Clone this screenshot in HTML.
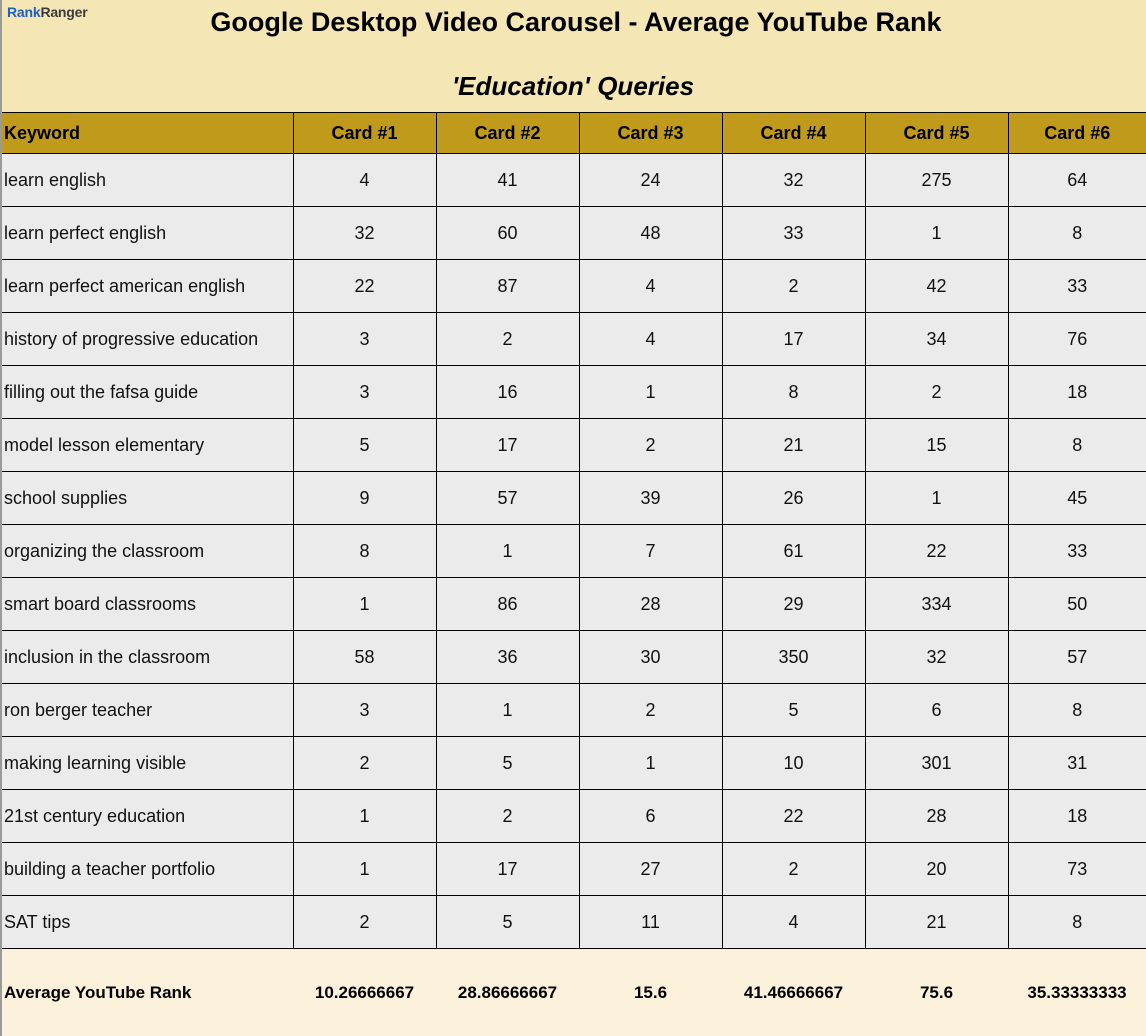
<!DOCTYPE html>
<html><head><meta charset="utf-8"><style>
html,body{margin:0;padding:0;width:1146px;height:1036px;overflow:hidden;background:#f5e7b5;font-family:"Liberation Sans",sans-serif;}
.wrap{position:absolute;left:0;top:0;width:1146px;height:1036px;}
.lb{position:absolute;left:0;top:0;width:2px;height:1036px;background:#9a9a9a;z-index:5}
.logo{position:absolute;left:7px;top:4px;font-size:14px;font-weight:bold;color:#3a3a3a;letter-spacing:-0.2px}
.logo span{color:#1f5fbf}
.t1{position:absolute;left:0;width:1152px;top:7px;text-align:center;font-size:27px;font-weight:bold;color:#000}
.t2{position:absolute;left:0;width:1146px;top:71px;text-align:center;font-size:26px;font-weight:bold;font-style:italic;color:#000}
table{position:absolute;left:0;top:112px;border-collapse:collapse;table-layout:fixed;width:1146px}
td{border:1px solid #000;font-size:18px;color:#111;text-align:center;padding:0;height:52px;background:#ebebeb}
td:first-child{text-align:left;padding-left:4px;border-left:none}
td:last-child{border-right:none}
tr.h td{background:#c09a1a;font-weight:bold;height:40px;color:#000;font-size:18px}
tr.f td{background:#fcf2dc;border:none;border-top:1px solid #000;height:87px;font-weight:bold;color:#000;font-size:17px}
</style></head><body><div class="wrap">
<div class="lb"></div>
<div class="logo"><span>Rank</span>Ranger</div>
<div class="t1">Google Desktop Video Carousel - Average YouTube Rank</div>
<div class="t2">'Education' Queries</div>
<table>
<colgroup><col style="width:293px"><col style="width:143px"><col style="width:143px"><col style="width:143px"><col style="width:143px"><col style="width:143px"><col style="width:138px"></colgroup>
<tr class="h"><td>Keyword</td><td>Card #1</td><td>Card #2</td><td>Card #3</td><td>Card #4</td><td>Card #5</td><td>Card #6</td></tr>
<tr><td>learn english</td><td>4</td><td>41</td><td>24</td><td>32</td><td>275</td><td>64</td></tr>
<tr><td>learn perfect english</td><td>32</td><td>60</td><td>48</td><td>33</td><td>1</td><td>8</td></tr>
<tr><td>learn perfect american english</td><td>22</td><td>87</td><td>4</td><td>2</td><td>42</td><td>33</td></tr>
<tr><td>history of progressive education</td><td>3</td><td>2</td><td>4</td><td>17</td><td>34</td><td>76</td></tr>
<tr><td>filling out the fafsa guide</td><td>3</td><td>16</td><td>1</td><td>8</td><td>2</td><td>18</td></tr>
<tr><td>model lesson elementary</td><td>5</td><td>17</td><td>2</td><td>21</td><td>15</td><td>8</td></tr>
<tr><td>school supplies</td><td>9</td><td>57</td><td>39</td><td>26</td><td>1</td><td>45</td></tr>
<tr><td>organizing the classroom</td><td>8</td><td>1</td><td>7</td><td>61</td><td>22</td><td>33</td></tr>
<tr><td>smart board classrooms</td><td>1</td><td>86</td><td>28</td><td>29</td><td>334</td><td>50</td></tr>
<tr><td>inclusion in the classroom</td><td>58</td><td>36</td><td>30</td><td>350</td><td>32</td><td>57</td></tr>
<tr><td>ron berger teacher</td><td>3</td><td>1</td><td>2</td><td>5</td><td>6</td><td>8</td></tr>
<tr><td>making learning visible</td><td>2</td><td>5</td><td>1</td><td>10</td><td>301</td><td>31</td></tr>
<tr><td>21st century education</td><td>1</td><td>2</td><td>6</td><td>22</td><td>28</td><td>18</td></tr>
<tr><td>building a teacher portfolio</td><td>1</td><td>17</td><td>27</td><td>2</td><td>20</td><td>73</td></tr>
<tr><td>SAT tips</td><td>2</td><td>5</td><td>11</td><td>4</td><td>21</td><td>8</td></tr>
<tr class="f"><td>Average YouTube Rank</td><td>10.26666667</td><td>28.86666667</td><td>15.6</td><td>41.46666667</td><td>75.6</td><td>35.33333333</td></tr>
</table>
</div></body></html>
